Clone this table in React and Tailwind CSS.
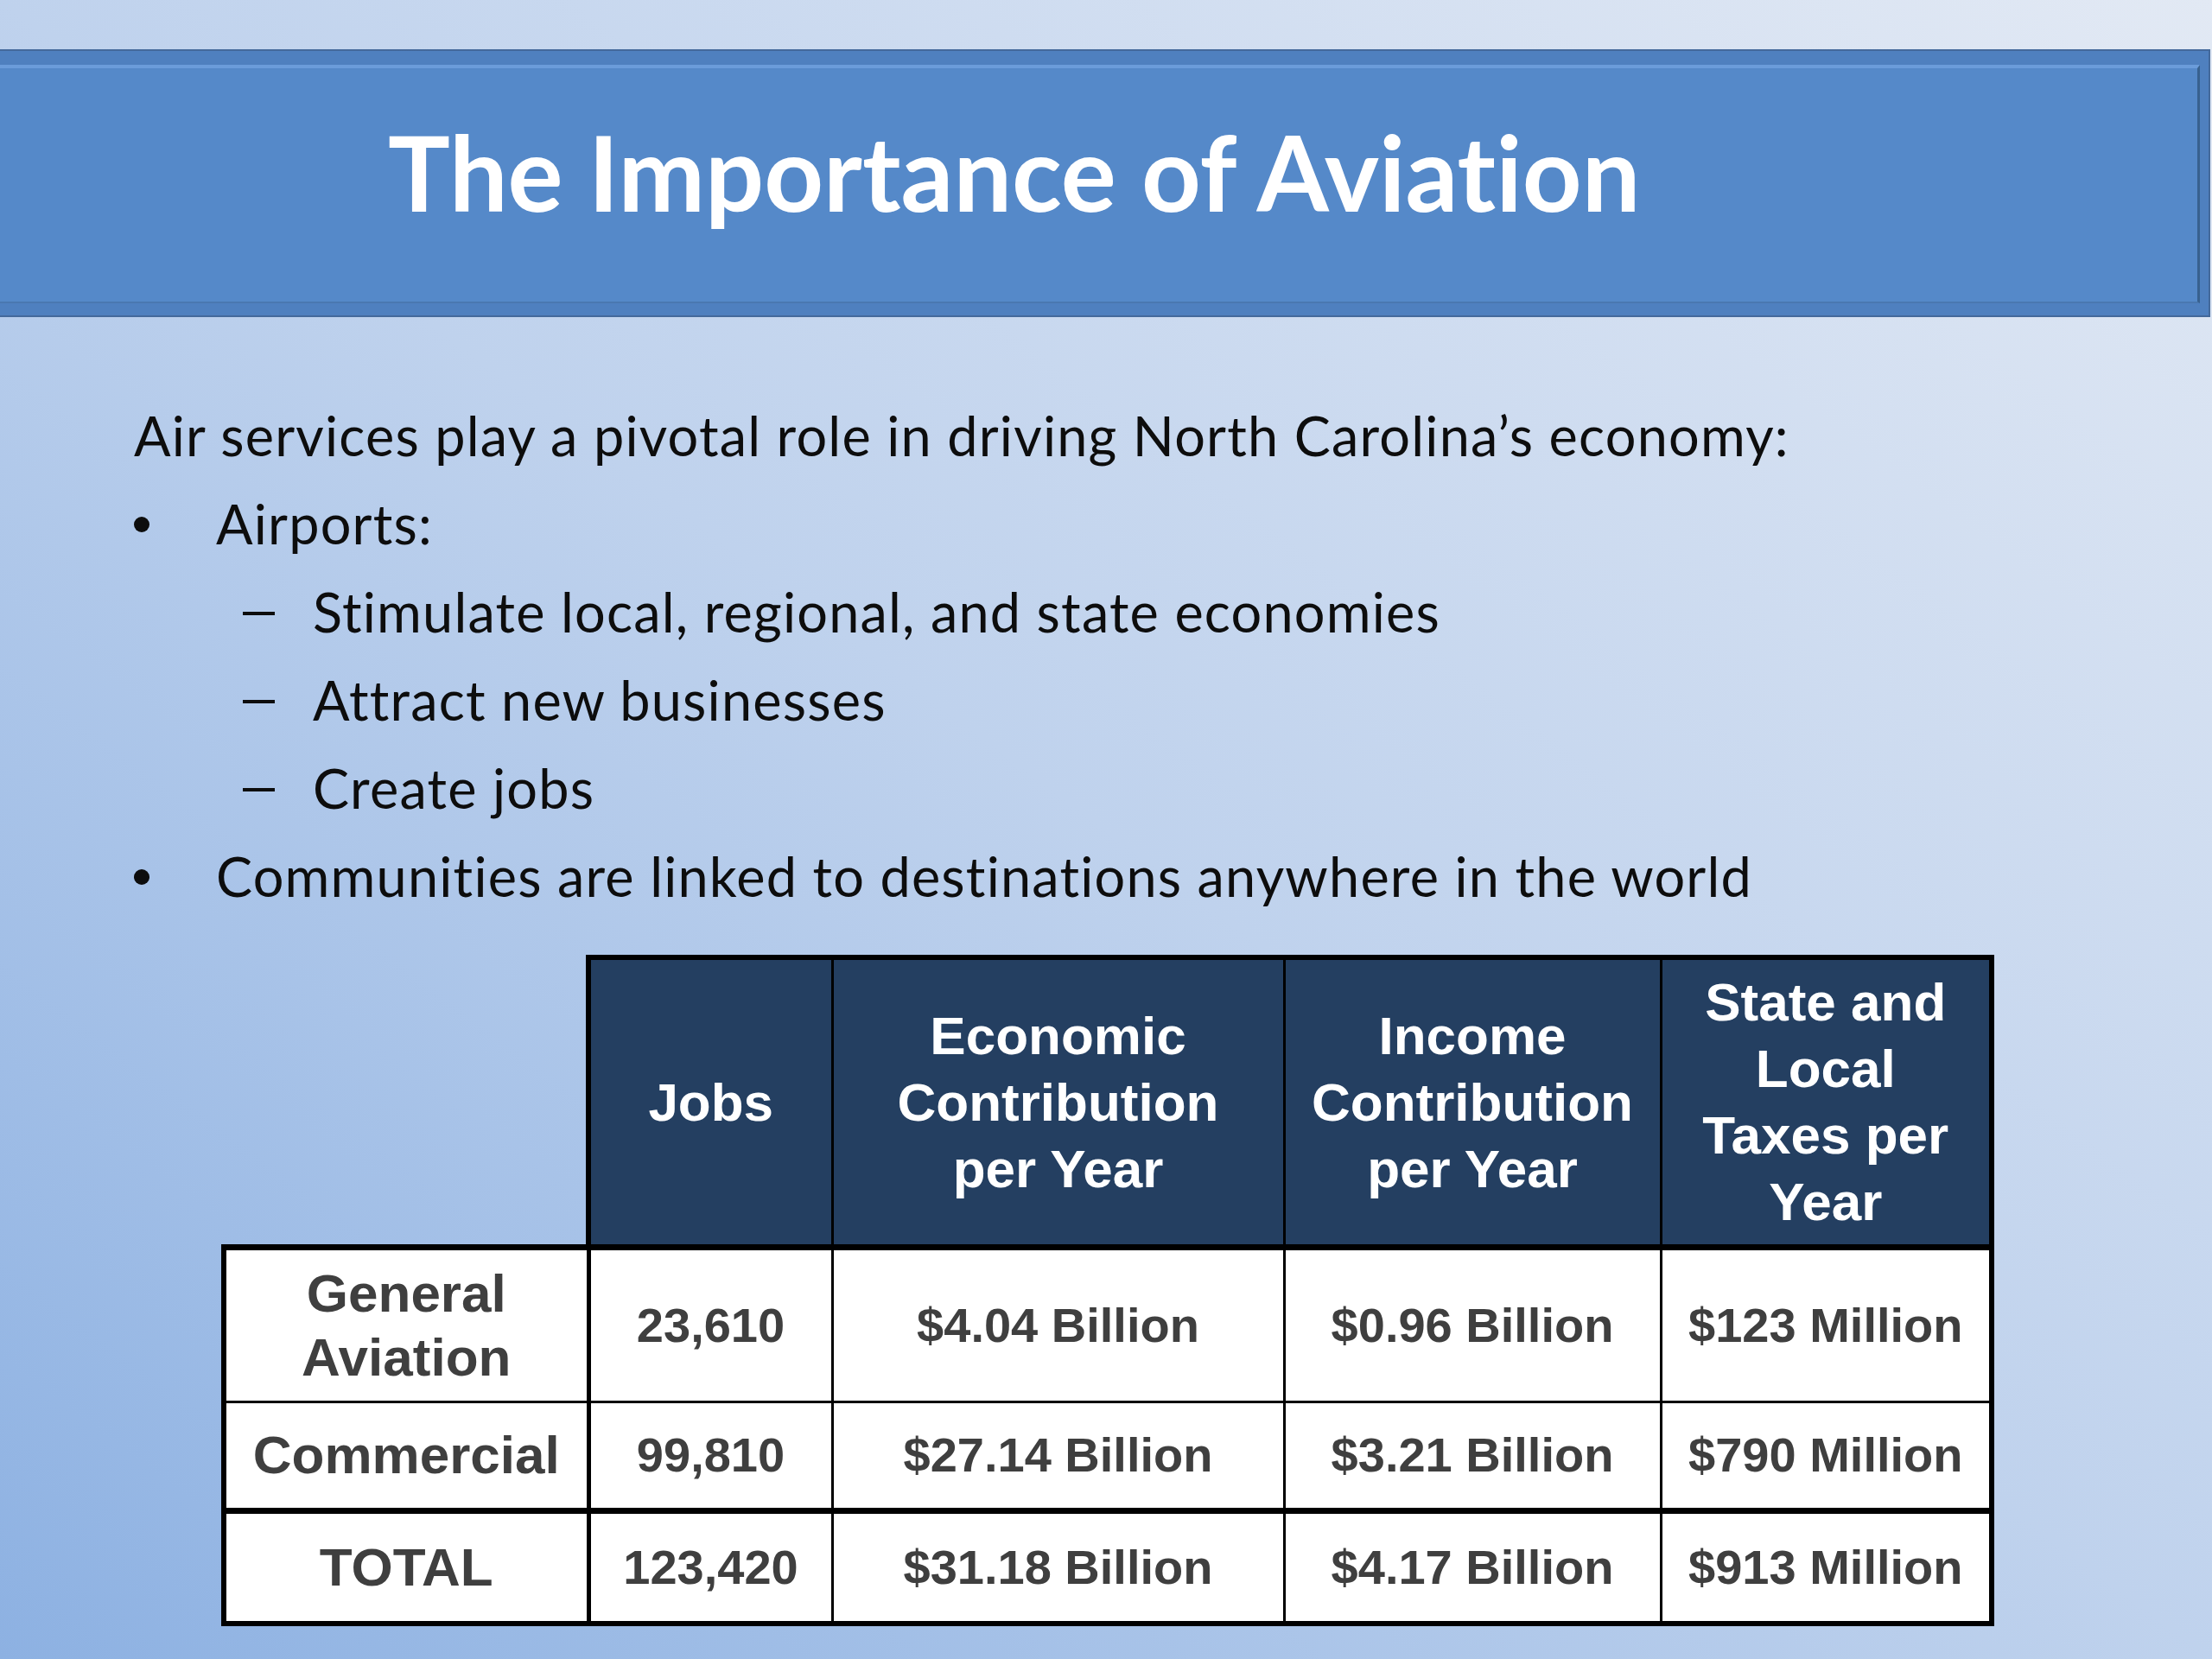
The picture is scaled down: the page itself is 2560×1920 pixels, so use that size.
import React from "react";

const rows = [
  { label: ["General", "Aviation"], jobs: "23,610", econ: "$4.04 Billion", income: "$0.96 Billion", taxes: "$123 Million" },
  { label: ["Commercial"], jobs: "99,810", econ: "$27.14 Billion", income: "$3.21 Billion", taxes: "$790 Million" },
  { label: ["TOTAL"], jobs: "123,420", econ: "$31.18 Billion", income: "$4.17 Billion", taxes: "$913 Million" },
];

function Dash() {
  return (
    <span className="w-[81px] flex items-center">
      <span className="block w-[37px] h-[4px] bg-[#0d0d0d] mt-[4px]"></span>
    </span>
  );
}

function Dot() {
  return (
    <span className="w-[95px] flex items-center">
      <span className="block w-[18px] h-[18px] rounded-full bg-[#0d0d0d] mt-[2px]"></span>
    </span>
  );
}

export default function App() {
  return (
    <div className="w-[2560px] h-[1920px] overflow-hidden flex flex-col bg-linear-to-tr from-[#8db1e2] via-[#bfd2ed] to-[#e2e9f4]">
      {/* title bar */}
      <div className="mt-[57px] w-[2558px] h-[310px] flex bg-[#4f80bf] border-y-2 border-r-2 border-[#44699b] pt-[16px] pb-[14px] pr-[10px]">
        <div className="flex-1 flex items-center bg-[#5589c9] border-t-[4px] border-t-[#6b9cda] border-r-[3px] border-r-[#38618f] border-b-2 border-b-[#4a78b0] pl-[449px]">
          <h1 className="text-white font-bold text-[120px] leading-none pb-[30px] [font-variant-ligatures:none]" style={{ fontFamily: "Lato, 'Open Sans', sans-serif" }}>
            The Importance of Aviation
          </h1>
        </div>
      </div>

      {/* bullets */}
      <div className="pl-[155px] pt-[86px] text-[#0d0d0d] text-[63px] leading-[102px] tracking-[1.2px] [font-variant-ligatures:none]" style={{ fontFamily: "Lato, 'Open Sans', sans-serif" }}>
        <p>Air services play a pivotal role in driving North Carolina’s economy:</p>
        <div className="flex">
          <Dot />
          <span>Airports:</span>
        </div>
        <div className="flex pl-[126px]">
          <Dash />
          <span>Stimulate local, regional, and state economies</span>
        </div>
        <div className="flex pl-[126px]">
          <Dash />
          <span>Attract new businesses</span>
        </div>
        <div className="flex pl-[126px]">
          <Dash />
          <span>Create jobs</span>
        </div>
        <div className="flex">
          <Dot />
          <span>Communities are linked to destinations anywhere in the world</span>
        </div>
      </div>

      {/* table */}
      <div className="pl-[256px] mt-[40px]">
        <table className="table-fixed border-collapse font-bold" style={{ fontFamily: "'Liberation Sans', Arial, sans-serif" }}>
          <colgroup>
            <col className="w-[422px]" />
            <col className="w-[282px]" />
            <col className="w-[523px]" />
            <col className="w-[436px]" />
            <col className="w-[383px]" />
          </colgroup>
          <thead>
            <tr className="h-[335px] text-white text-[62px] leading-[77px] text-center">
              <th className="border-0"></th>
              <th className="bg-[#243f61] border-[6px] border-black border-r-[3px] border-b-[7px] font-bold">Jobs</th>
              <th className="bg-[#243f61] border-[6px] border-black border-x-[3px] border-b-[7px] font-bold">Economic<br />Contribution<br />per Year</th>
              <th className="bg-[#243f61] border-[6px] border-black border-x-[3px] border-b-[7px] font-bold">Income<br />Contribution<br />per Year</th>
              <th className="bg-[#243f61] border-[6px] border-black border-l-[3px] border-b-[7px] font-bold">State and<br />Local<br />Taxes per<br />Year</th>
            </tr>
          </thead>
          <tbody className="text-[#3f3f3f] text-center">
            {rows.map((r, i) => (
              <tr key={i} className={i === 0 ? "h-[179px]" : i === 1 ? "h-[126px]" : "h-[131px]"}>
                <td className={`bg-white border-[3px] border-black border-l-[6px] border-r-[5px] text-[62px] leading-[74px] ${i === 0 ? "border-t-[7px]" : ""} ${i === 2 ? "border-t-[7px] border-b-[6px]" : ""}`}>
                  {r.label.map((l) => (
                    <div key={l}>{l}</div>
                  ))}
                </td>
                {[r.jobs, r.econ, r.income, r.taxes].map((v, j) => (
                  <td key={j} className={`bg-white border-[3px] border-black text-[56px] ${j === 3 ? "border-r-[6px]" : ""} ${i === 2 ? "border-t-[7px] border-b-[6px]" : ""}`}>
                    {v}
                  </td>
                ))}
              </tr>
            ))}
          </tbody>
        </table>
      </div>
    </div>
  );
}
